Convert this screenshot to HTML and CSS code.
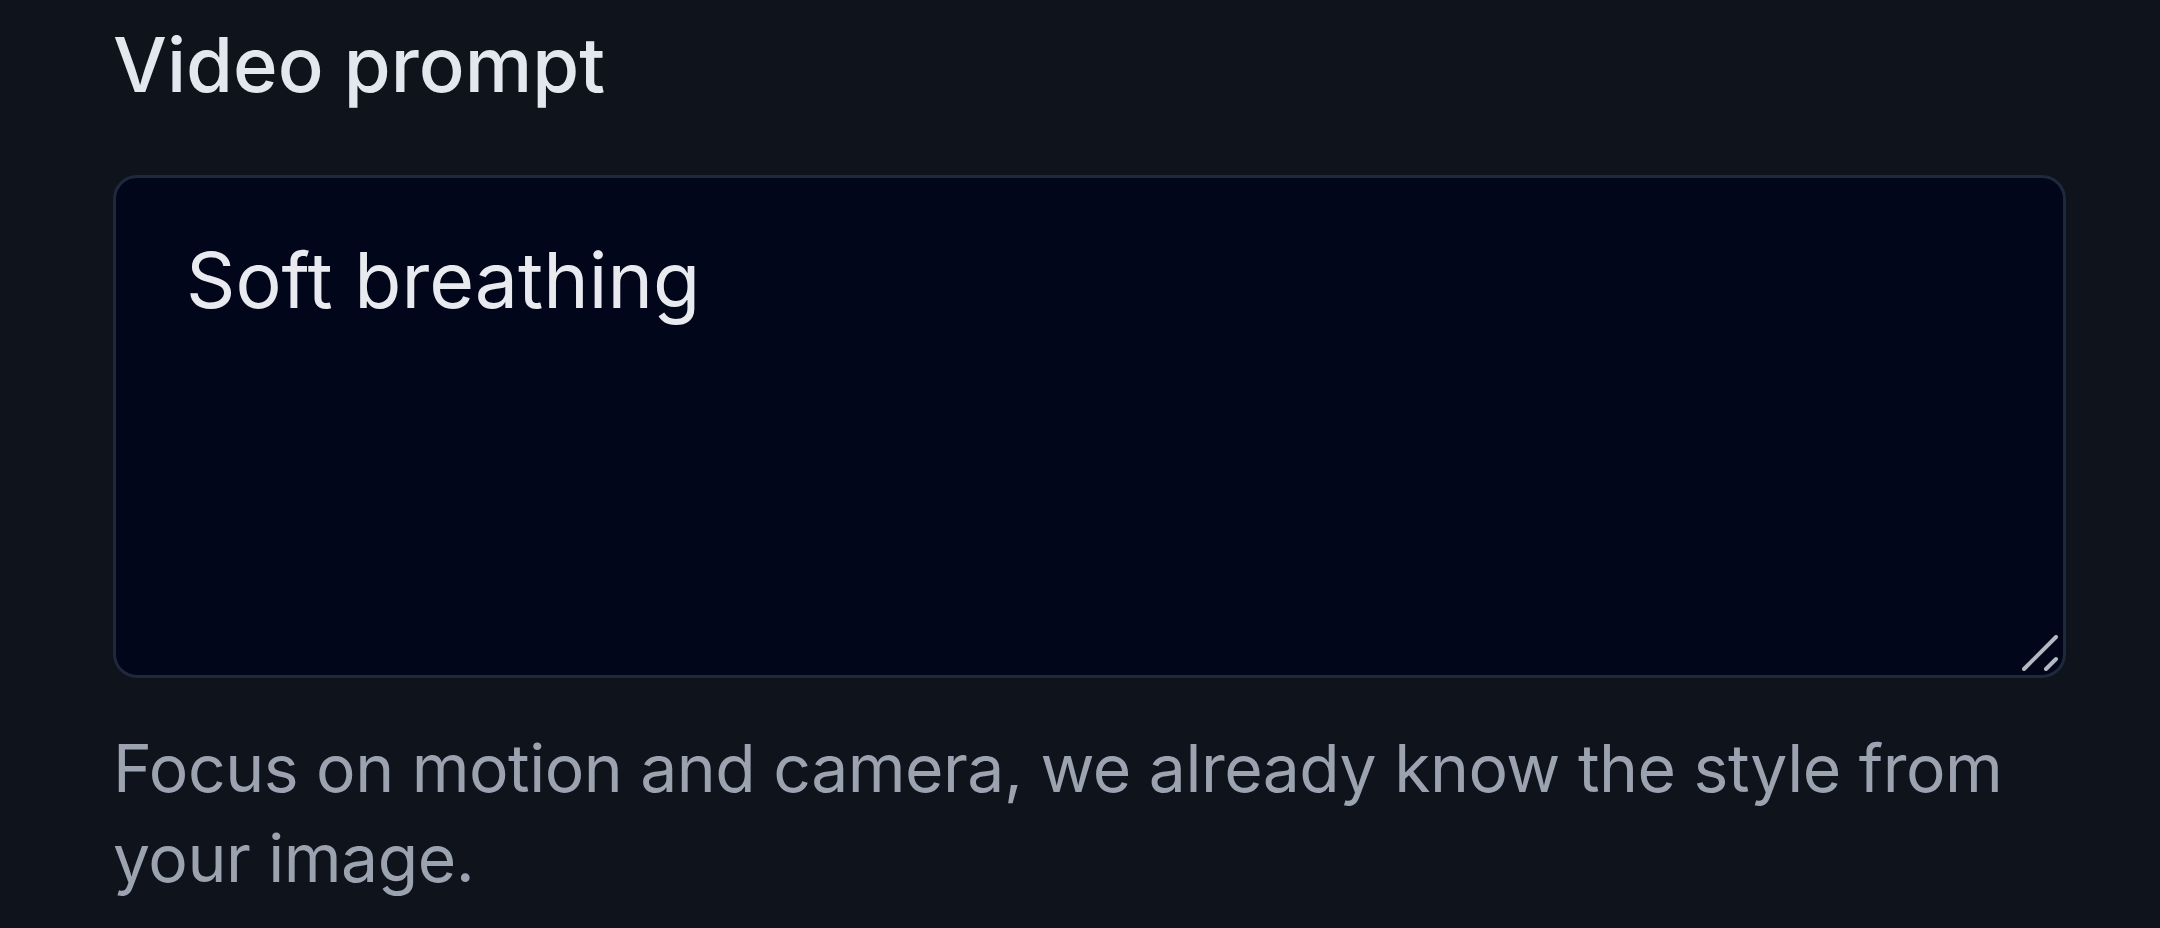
FILE: index.html
```html
<!DOCTYPE html>
<html lang="en">
<head>
<meta charset="utf-8">
<title>Video prompt</title>
<link rel="stylesheet" href="styles.css">
</head>
<body>
<div class="page">
  <div class="field">
    <label class="field-label" for="prompt">Video prompt</label>
    <div class="textarea-wrap">
      <textarea id="prompt" class="prompt-input" rows="3">Soft breathing</textarea>
      <svg class="resize-handle" viewBox="0 0 36 36" width="36" height="36" aria-hidden="true">
        <line x1="2" y1="34" x2="34" y2="2" />
        <line x1="24" y1="34" x2="34" y2="24" />
      </svg>
    </div>
    <p class="field-help">Focus on motion and camera, we already know the style from your image.</p>
  </div>
</div>
</body>
</html>
```

FILE: styles.css
```css
html, body {
  margin: 0;
  padding: 0;
  background: #0f131b;
  height: 100%;
}

.page {
  padding: 14px 94px 0 113px;
  font-family: "Inter", "Noto Sans", sans-serif;
}

.field {
  display: flex;
  flex-direction: column;
}

.field-label {
  font-size: 76px;
  line-height: 100px;
  font-weight: 500;
  color: #e5e7ef;
  margin-bottom: 61px;
}

.textarea-wrap {
  position: relative;
  display: flex;
}

.prompt-input {
  flex: 1;
  box-sizing: border-box;
  height: 503px;
  margin: 0;
  padding: 45px 70px;
  border: 3px solid #1e293b;
  border-radius: 24px;
  background: #02061a;
  color: #e8eaf0;
  font-family: "Inter", "Noto Sans", sans-serif;
  font-size: 77px;
  line-height: 115px;
  resize: none;
  outline: none;
}

.resize-handle {
  position: absolute;
  right: 8px;
  bottom: 7px;
  stroke: #b4b8c2;
  stroke-width: 4;
  stroke-linecap: round;
}

.field-help {
  margin: 45px 0 0;
  font-size: 66px;
  line-height: 90px;
  letter-spacing: -0.5px;
  color: #9ca3b0;
}
```
